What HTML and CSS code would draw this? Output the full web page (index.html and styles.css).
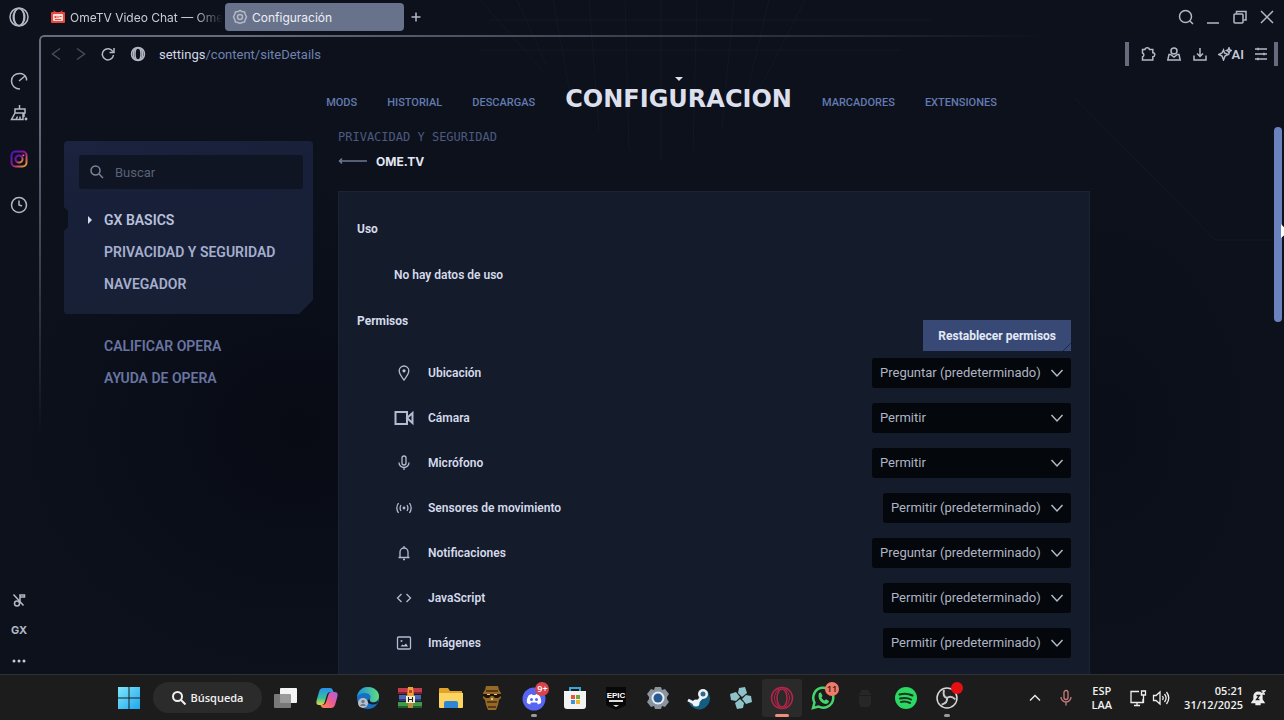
FILE: index.html
```
<!DOCTYPE html>
<html lang="es">
<head>
    <meta charset="utf-8">
    <title>Configuración</title>
    <link rel="stylesheet" href="styles.css">
</head>
<body>
    <div class="browser">
        <svg class="grid-lines" viewBox="0 0 1284 674" preserveAspectRatio="none" aria-hidden="true">
            <path d="M480 0l62 70M517 0l30 66M553 0l20 110M589 0l10 130M625 0l4 150M661 0v160M697 0l-4 150M734 0l-12 130M769 0l-26 110M805 0l-46 90M480 50h420M490 20h440"/>
            <path d="M1075 98l140 142h60"/>
        </svg>

        <header class="tabs">
            <button class="icon-btn opera-menu" aria-label="Menú">
                <svg width="22" height="22" viewBox="0 0 22 22"><circle cx="11" cy="11" r="9"/><ellipse cx="11" cy="11" rx="5" ry="8.5"/><path d="M9 3c-5 4-5 12 0 16M13 3c5 4 5 12 0 16"/></svg>
            </button>
            <button class="tab">
                <svg class="ometv" width="16" height="16" viewBox="0 0 16 16"><path fill="#e9483f" d="M3 1l3 2h4l3-2-1 2h2a1 1 0 0 1 1 1v9a1 1 0 0 1-1 1H2a1 1 0 0 1-1-1V4a1 1 0 0 1 1-1h2z"/><rect x="3" y="5" width="10" height="7" rx="1" fill="#f5dedb"/><path d="M4.500 7h2v2h-2zM7.500 7h1v2h-1zM9.500 7h2v1h-2zM5 10h6v1H5z" fill="#e9483f"/></svg>
                <span class="tab-title">OmeTV Video Chat — Ome</span>
            </button>
            <button class="tab active">
                <svg width="16" height="16" viewBox="0 0 16 16"><path d="M8 1.500l2 1 2.500.5.800 2.500L14.500 8l-1.200 2.500-.8 2.500-2.500.5-2 1-2-1-2.500-.5-.8-2.500L1.500 8l1.200-2.500.8-2.500L6 2.500z"/><circle cx="8" cy="8" r="2.500"/></svg>
                <span class="tab-title">Configuración</span>
            </button>
            <button class="icon-btn new-tab" aria-label="Nueva pestaña">
                <svg width="12" height="12" viewBox="0 0 12 12"><path d="M6 1.500v9M1.500 6h9"/></svg>
            </button>
            <div class="window-buttons">
                <button class="icon-btn" aria-label="Buscar pestañas"><svg width="16" height="16" viewBox="0 0 16 16"><circle cx="7.500" cy="7.500" r="6"/><path d="M12 12l3 3"/></svg></button>
                <button class="icon-btn" aria-label="Minimizar"><svg width="14" height="16" viewBox="0 0 14 16"><path d="M1 14h12"/></svg></button>
                <button class="icon-btn" aria-label="Restaurar"><svg width="16" height="16" viewBox="0 0 16 16"><rect x="2" y="5" width="9" height="9" rx="1"/><path d="M4.500 4.500v-2H14V11h-2.500"/></svg></button>
                <button class="icon-btn" aria-label="Cerrar"><svg width="14" height="14" viewBox="0 0 14 14"><path d="M1 1l12 12M13 1L1 13"/></svg></button>
            </div>
        </header>

        <div class="body">
            <aside class="sidebar">
                <button class="icon-btn" aria-label="GX Control"><svg width="18" height="18" viewBox="0 0 18 18"><path d="M10 17C5 17 1.500 13.500 1.500 9S5 1.500 9.500 1.500c3.500 0 6 2 7 5v2M9 9l6-5"/></svg></button>
                <button class="icon-btn" aria-label="GX Cleaner"><svg width="18" height="18" viewBox="0 0 18 18"><path d="M9.500 1v4M5 5h10v4H5zM5 9l-3.500 6.500H13V9M6 15.500l1.500-3M10 15.500v-3M14 9v4"/><circle cx="16" cy="15" r=".7"/></svg></button>
                <button class="icon-btn instagram" aria-label="Instagram">
                    <svg width="18" height="18" viewBox="0 0 18 18">
                        <defs><linearGradient id="insta" x1="0" y1="0" x2="1" y2="1"><stop offset="0" stop-color="#4316c0"/><stop offset=".5" stop-color="#9b168e"/><stop offset="1" stop-color="#f5a623"/></linearGradient></defs>
                        <rect x="1.500" y="1.500" width="15" height="15" rx="4" stroke-width="2"/><circle cx="9" cy="9" r="3.500" stroke-width="2"/><circle cx="13" cy="5" r=".6"/>
                    </svg>
                </button>
                <button class="icon-btn history" aria-label="Historial"><svg width="18" height="18" viewBox="0 0 18 18"><circle cx="9" cy="9" r="7.500"/><path d="M9 4.500V9l3 1"/></svg></button>
                <button class="icon-btn push" aria-label="Música"><svg width="14" height="14" viewBox="0 0 14 14"><path d="M8 10.500V2h4.500v2H8M1.500 1.500l10 11"/><circle cx="5" cy="10.500" r="2.500"/></svg></button>
                <button class="icon-btn gx">GX</button>
                <button class="icon-btn" aria-label="Más"><svg width="14" height="6" viewBox="0 0 14 6"><circle class="dot-fill" cx="2" cy="3" r="1.500"/><circle class="dot-fill" cx="7" cy="3" r="1.500"/><circle class="dot-fill" cx="12" cy="3" r="1.500"/></svg></button>
            </aside>

            <div class="page">
                <div class="address-bar">
                    <button class="icon-btn dim" aria-label="Atrás"><svg width="10" height="14" viewBox="0 0 10 14"><path d="M9 1.500L1.500 7 9 12.500"/></svg></button>
                    <button class="icon-btn dim" aria-label="Adelante"><svg width="10" height="14" viewBox="0 0 10 14"><path d="M1 1.500L8.500 7 1 12.500"/></svg></button>
                    <button class="icon-btn" aria-label="Recargar"><svg width="14" height="14" viewBox="0 0 14 14"><path d="M11.800 4.500A5.600 5.600 0 1 0 12.500 8M13 1v4.500H8.500"/></svg></button>
                    <svg class="site-icon" width="16" height="16" viewBox="0 0 16 16"><circle cx="8" cy="8" r="6.500"/><ellipse cx="8" cy="8" rx="3" ry="6"/><path d="M5.500 2.500c-3 3-3 8 0 11M10.500 2.500c3 3 3 8 0 11"/></svg>
                    <span class="url"><b>settings</b>/content/siteDetails</span>
                    <div class="toolbar">
                        <button class="icon-btn" aria-label="Extensiones"><svg width="16" height="16" viewBox="0 0 16 16"><path d="M2.500 3.500H5C5.200 1 9.300 1 9.500 3.500h3.300v3.300c2.600.2 2.600 3.700 0 4V14H2.500v-3c1.800-.8 1.800-3.200 0-4z"/></svg></button>
                        <button class="icon-btn" aria-label="Perfil"><svg width="16" height="16" viewBox="0 0 16 16"><circle cx="8" cy="5" r="3"/><path d="M4.500 8.500H3L1.800 14h12.400L13 8.500h-1.500L8 11z"/></svg></button>
                        <button class="icon-btn" aria-label="Descargas"><svg width="16" height="16" viewBox="0 0 16 16"><path d="M8 2v8M5 7.500l3 3 3-3M2 9.500V14h12V9.500"/></svg></button>
                        <button class="icon-btn ai"><svg width="14" height="14" viewBox="0 0 14 14"><path d="M5.500 3l1 3 3.500 1.500L7 9l-1.500 4L4 9 .8 7.500 4 6zM11 .8l.7 2 1.600.7-1.600.7-.7 2-.7-2-1.600-.7 1.600-.7z"/></svg>AI</button>
                        <button class="icon-btn" aria-label="Configuración rápida"><svg width="14" height="14" viewBox="0 0 14 14"><path d="M1 2h12M1 7h12M1 12h12M4 .8v2.400M10 5.800v2.400M4 10.800v2.400"/></svg></button>
                    </div>
                </div>

                <nav class="sections">
                    <a href="#">MODS</a>
                    <a href="#">HISTORIAL</a>
                    <a href="#">DESCARGAS</a>
                    <h1>CONFIGURACION</h1>
                    <a href="#">MARCADORES</a>
                    <a href="#">EXTENSIONES</a>
                </nav>

                <div class="settings">
                    <div class="menu-column">
                        <div class="menu">
                            <label class="search">
                                <svg width="14" height="14" viewBox="0 0 14 14"><circle cx="5.500" cy="5.500" r="4.500"/><path d="M9 9l4 4"/></svg>
                                <input type="text" placeholder="Buscar" aria-label="Buscar">
                            </label>
                            <a class="current" href="#">GX BASICS</a>
                            <a href="#">PRIVACIDAD Y SEGURIDAD</a>
                            <a href="#">NAVEGADOR</a>
                        </div>
                        <div class="menu-extra">
                            <a href="#">CALIFICAR OPERA</a>
                            <a href="#">AYUDA DE OPERA</a>
                        </div>
                    </div>

                    <main class="content">
                        <div class="crumb">PRIVACIDAD Y SEGURIDAD</div>
                        <div class="site">
                            <a href="#" aria-label="Volver"><svg width="30" height="8" viewBox="0 0 30 8"><path d="M29 4H1.500M4 1.500L1.500 4 4 6.500"/></svg></a>
                            <h2>OME.TV</h2>
                        </div>
                        <div class="card">
                            <h3>Uso</h3>
                            <p>No hay datos de uso</p>
                            <div class="permissions-head">
                                <h3>Permisos</h3>
                                <button class="reset">Restablecer permisos</button>
                            </div>
                            <div class="row">
                                <svg width="20" height="20" viewBox="0 0 20 20"><path d="M10 17C7 13 5.200 11 5.200 7.800a4.800 4.800 0 0 1 9.600 0C14.800 11 13 13 10 17z"/><circle class="dot-fill" cx="10" cy="7.800" r="1.600"/></svg>
                                <label for="ubicacion">Ubicación</label>
                                <div class="select">
                                    <select id="ubicacion"><option>Preguntar (predeterminado)</option><option>Permitir</option><option>Bloquear</option></select>
                                    <svg width="14" height="10" viewBox="0 0 14 10"><path d="M1.500 2L7 8l5.500-6"/></svg>
                                </div>
                            </div>
                            <div class="row">
                                <svg width="20" height="20" viewBox="0 0 20 20"><path stroke-width="2" d="M1.500 4H13v12H1.500zM13 10l5.500-5v10z"/></svg>
                                <label for="camara">Cámara</label>
                                <div class="select">
                                    <select id="camara"><option>Preguntar (predeterminado)</option><option selected>Permitir</option><option>Bloquear</option></select>
                                    <svg width="14" height="10" viewBox="0 0 14 10"><path d="M1.500 2L7 8l5.500-6"/></svg>
                                </div>
                            </div>
                            <div class="row">
                                <svg width="20" height="20" viewBox="0 0 20 20"><rect x="8" y="3" width="4" height="9" rx="2"/><path d="M5 9.500a5 5 0 0 0 10 0M10 14.500V17"/></svg>
                                <label for="microfono">Micrófono</label>
                                <div class="select">
                                    <select id="microfono"><option>Preguntar (predeterminado)</option><option selected>Permitir</option><option>Bloquear</option></select>
                                    <svg width="14" height="10" viewBox="0 0 14 10"><path d="M1.500 2L7 8l5.500-6"/></svg>
                                </div>
                            </div>
                            <div class="row">
                                <svg width="20" height="20" viewBox="0 0 20 20"><path d="M4.500 5c-2 3-2 7 0 10M7 7c-1.200 2-1.200 4 0 6M15.500 5c2 3 2 7 0 10M13 7c1.200 2 1.200 4 0 6"/><circle cx="10" cy="10" r=".8"/></svg>
                                <label for="sensores">Sensores de movimiento</label>
                                <div class="select">
                                    <select id="sensores"><option>Permitir (predeterminado)</option><option>Permitir</option><option>Bloquear</option></select>
                                    <svg width="14" height="10" viewBox="0 0 14 10"><path d="M1.500 2L7 8l5.500-6"/></svg>
                                </div>
                            </div>
                            <div class="row">
                                <svg width="20" height="20" viewBox="0 0 20 20"><path d="M4.500 14.500h11M6 14.500V9a4 4 0 0 1 8 0v5.500M10 3v2M9 16.500h2"/></svg>
                                <label for="notificaciones">Notificaciones</label>
                                <div class="select">
                                    <select id="notificaciones"><option>Preguntar (predeterminado)</option><option>Permitir</option><option>Bloquear</option></select>
                                    <svg width="14" height="10" viewBox="0 0 14 10"><path d="M1.500 2L7 8l5.500-6"/></svg>
                                </div>
                            </div>
                            <div class="row">
                                <svg width="20" height="20" viewBox="0 0 20 20"><path d="M7.500 6l-4 4 4 4M12.500 6l4 4-4 4"/></svg>
                                <label for="javascript">JavaScript</label>
                                <div class="select">
                                    <select id="javascript"><option>Permitir (predeterminado)</option><option>Permitir</option><option>Bloquear</option></select>
                                    <svg width="14" height="10" viewBox="0 0 14 10"><path d="M1.500 2L7 8l5.500-6"/></svg>
                                </div>
                            </div>
                            <div class="row">
                                <svg width="20" height="20" viewBox="0 0 20 20"><rect x="3.500" y="4" width="13" height="12" rx="1"/><path class="dot-fill" d="M6.500 13.500l2-2 1.500 1 2-2 2 3z"/><circle cx="7.500" cy="8" r=".4"/></svg>
                                <label for="imagenes">Imágenes</label>
                                <div class="select">
                                    <select id="imagenes"><option>Permitir (predeterminado)</option><option>Permitir</option><option>Bloquear</option></select>
                                    <svg width="14" height="10" viewBox="0 0 14 10"><path d="M1.500 2L7 8l5.500-6"/></svg>
                                </div>
                            </div>
                        </div>
                    </main>
                </div>
                <div class="scrollbar"></div>
                <svg class="cursor" width="12" height="18" viewBox="0 0 12 18"><path d="M1 1v14l3.500-3 2 5 2-1-2-4.500H11z"/></svg>
            </div>
        </div>
    </div>

    <footer class="taskbar">
        <button class="start" aria-label="Inicio">
            <svg width="22" height="22" viewBox="0 0 22 22">
                <defs><linearGradient id="win" x1="0" y1="0" x2="1" y2="1"><stop offset="0" stop-color="#7fe6fb"/><stop offset="1" stop-color="#1ea7ee"/></linearGradient></defs>
                <path fill="url(#win)" d="M0 0h10.500v10.500H0zM11.500 0H22v10.500H11.500zM0 11.500h10.500V22H0zM11.500 11.500H22V22H11.500z"/>
            </svg>
        </button>
        <button class="task-search"><svg width="14" height="14" viewBox="0 0 14 14"><circle cx="5.500" cy="5.500" r="4.500"/><path d="M9 9l4.500 4.500"/></svg>Búsqueda</button>

        <div class="apps">
            <button aria-label="Vista de tareas"><svg width="26" height="26" viewBox="0 0 26 26"><rect x="7" y="3" width="17" height="15" rx="1" fill="#f4f4f4"/><rect x="1" y="9" width="17" height="14" rx="1" fill="#8a8a8a" opacity=".85"/></svg></button>
            <button aria-label="Copilot">
                <svg width="26" height="26" viewBox="0 0 26 26">
                    <defs><linearGradient id="cp1" x1="0" y1="0" x2="0" y2="1"><stop offset="0" stop-color="#2a8ff2"/><stop offset=".6" stop-color="#35c19a"/><stop offset="1" stop-color="#f2d43b"/></linearGradient>
                    <linearGradient id="cp2" x1="1" y1="0" x2="0" y2="1"><stop offset="0" stop-color="#a661e8"/><stop offset=".5" stop-color="#ef5b8d"/><stop offset="1" stop-color="#fb8a4a"/></linearGradient></defs>
                    <path fill="url(#cp1)" d="M9 3h7c2 0 3 2 3.500 4h-3c-2 0-3 1-3.600 3l-2.200 7c-.5 2-1.500 3-3.500 3H5c-3 0-3-3-2-6l2-7c.8-3 2-4 4-4z"/>
                    <path fill="url(#cp2)" d="M17 23h-7c-2 0-3-1-3.500-3h2c2 0 3-1 3.600-3l2.200-7c.5-2 1.500-3 3.500-3H21c3 0 3 3 2 6l-2 7c-.8 2-2 3-4 3z"/>
                </svg>
            </button>
            <button aria-label="Edge">
                <svg width="26" height="26" viewBox="0 0 26 26">
                    <defs><linearGradient id="edge" x1="0" y1="0" x2="1" y2="0"><stop offset="0" stop-color="#1d8fe0"/><stop offset="1" stop-color="#5fdc7c"/></linearGradient></defs>
                    <circle cx="13" cy="13" r="11" fill="#1670c0"/>
                    <path fill="url(#edge)" d="M2 12C3 5 8 2 13 2c6 0 11 4 11 9 0 4-3 6-6 6-2 0-4-1-3-3 2-3-1-6-5-6-4 0-7 2-8 4z"/>
                    <path fill="#1b1b1c" d="M15 14c-1 2 1 4 4 3.500 2 0 3-1 4-2 0 1 0 2-1 3-4 2-9 1-10-3z"/>
                    <circle cx="8" cy="18" r="5" fill="#b9c2cc"/><circle cx="8" cy="16.500" r="1.800" fill="#717b86"/><path d="M5 21c1-3 5-3 6 0z" fill="#717b86"/>
                </svg>
            </button>
            <button aria-label="WinRAR"><svg width="26" height="26" viewBox="0 0 26 26"><path fill="#c23b4b" d="M1 3h24v6H1z"/><path fill="#4d68b8" d="M2 10h22v6H2z"/><path fill="#3f9a4c" d="M1 17h24v6H1z"/><path fill="#7c2430" d="M1 7h24v2H1z"/><path fill="#2c3f7c" d="M2 14h22v2H2z"/><path fill="#215c2b" d="M1 21h24v2H1z"/><path fill="#e8a531" d="M11 2h5l1 9h-7z"/><path fill="#d33a2e" d="M12 5h3v3h-3z"/><path fill="#f3ead2" d="M9 11h9v7H9z"/><path fill="#222" d="M11 12h1v5h-1zM15 12h1v5h-1zM12 14h3v1h-3z"/><path fill="#b98a3a" d="M11 18h5v5h-5z"/></svg></button>
            <button aria-label="Explorador"><svg width="26" height="26" viewBox="0 0 26 26"><path fill="#e0a32c" d="M1 4a1 1 0 0 1 1-1h8l2 3h12v6H1z"/><path fill="#fbd462" d="M1 8h24v14a1 1 0 0 1-1 1H2a1 1 0 0 1-1-1z"/><path fill="#2f86d6" d="M6 23v-5a2 2 0 0 1 2-2h10a2 2 0 0 1 2 2v5z"/></svg></button>
            <button aria-label="Juego"><svg width="26" height="26" viewBox="0 0 26 26"><path fill="#94692a" d="M7 1h12l1 4 2 3v5l-2 2-1 5-2 5H9l-2-5-1-5-2-2V8l2-3z"/><path fill="#5b3a12" d="M7 5h12v2H7zM8 16h10v2H8zM9 21h8v2H9z"/><path fill="#1c1408" d="M4 9h18v2l-3 2h-3l-2-2h-2l-2 2H7l-3-2z"/><path fill="#e5c878" d="M8 9h3v1H8zM15 9h3v1h-3zM12 13h2v2h-2z"/></svg></button>
            <button aria-label="Discord"><svg width="26" height="26" viewBox="0 0 26 26"><circle cx="13" cy="14" r="11.500" fill="#5865f2"/><path fill="#fff" d="M8 10l3-1 .5 1h3l.5-1 3 1c2 3 2.500 5 2 8l-3 1.500-1-2h-6l-1 2L6 18c-.5-3 0-5 2-8z"/><circle cx="10.500" cy="14.500" r="1.500" fill="#5865f2"/><circle cx="15.500" cy="14.500" r="1.500" fill="#5865f2"/></svg><span class="badge">9+</span><i class="running"></i></button>
            <button aria-label="Microsoft Store"><svg width="26" height="26" viewBox="0 0 26 26"><path d="M8 7V3h10v4" fill="none" stroke="#36a6d8" stroke-width="2"/><path fill="#f3f3f3" d="M2 6h22v15a3 3 0 0 1-3 3H5a3 3 0 0 1-3-3z"/><path fill="#e8563a" d="M9 10h4v4H9z"/><path fill="#71a83a" d="M14 10h4v4h-4z"/><path fill="#3c93d6" d="M9 15h4v4H9z"/><path fill="#efb42f" d="M14 15h4v4h-4z"/></svg></button>
            <button aria-label="Epic Games"><svg width="26" height="26" viewBox="0 0 26 26"><path fill="#080808" d="M3 2h20v18l-10 5-10-5z"/><text x="13" y="13" class="epic">EPIC</text><path fill="#ddd" d="M6 15h14v2H6zM10 20h6l-3 2z"/></svg></button>
            <button aria-label="Configuración"><svg width="26" height="26" viewBox="0 0 26 26"><path fill="#8a939e" d="M10 2h6l1 3 3-1 4 5-2 3v2l2 3-4 5-3-1-1 3h-6l-1-3-3 1-4-5 2-3v-2L2 9l4-5 3 1z"/><circle cx="13" cy="13" r="6.500" fill="#e8eef5"/><circle cx="13" cy="13" r="4.500" fill="#28598f"/></svg></button>
            <button aria-label="Steam"><svg width="26" height="26" viewBox="0 0 26 26"><path fill="#155d80" d="M24 13a11 11 0 0 1-21 5l8-3 6-10 5 1z"/><circle cx="17" cy="9" r="5" fill="#eef3f7"/><circle cx="17" cy="9" r="2.500" fill="#3a6686"/><path d="M2 15l8 4 6-7" fill="none" stroke="#eef3f7" stroke-width="3"/><circle cx="10" cy="18" r="3.500" fill="#eef3f7"/></svg></button>
            <button aria-label="Emulador"><svg width="26" height="26" viewBox="0 0 26 26"><g fill="#8fc3c9"><path d="M11 3l6-1 2 6-5 4-4-4z"/><path d="M11 3l6-1 2 6-5 4-4-4z" transform="rotate(90 13 13)"/><path d="M11 3l6-1 2 6-5 4-4-4z" transform="rotate(180 13 13)"/><path d="M11 3l6-1 2 6-5 4-4-4z" transform="rotate(270 13 13)"/></g></svg></button>
            <button class="open" aria-label="Opera GX"><svg width="26" height="26" viewBox="0 0 26 26"><g fill="none" stroke="#b8234c" stroke-width="1.500"><circle cx="13" cy="13" r="10.500"/><ellipse cx="13" cy="13" rx="5" ry="9"/><path d="M10 4c-6 5-6 13 0 18M16 4c6 5 6 13 0 18" stroke-width="1"/></g></svg><i class="running"></i></button>
            <button aria-label="WhatsApp"><svg width="26" height="26" viewBox="0 0 26 26"><path d="M3 23l1.500-5.500A10 10 0 1 1 8.500 21.500z" fill="none" stroke="#45d36c" stroke-width="2.500"/><path fill="#45d36c" d="M9 8l2-.5 1.500 3.500-1 1.500c.7 1.500 1.500 2.300 3 3l1.500-1.200 3 1.700c0 2-2 3-3.500 3C11 18.500 7 13 9 8z"/></svg><span class="badge orange">11</span></button>
            <button aria-label="Aplicación"><svg width="26" height="26" viewBox="0 0 26 26"><path fill="#272727" d="M9 5h8v3h2v2H7V8h2zM7 11h12v8l-2 3H9l-2-3z"/></svg></button>
            <button aria-label="Spotify"><svg width="26" height="26" viewBox="0 0 26 26"><circle cx="13" cy="13" r="11" fill="#2bd863"/><path d="M6.500 9.500c5-1.500 9-1 13 1M7 13.500c4-1 8-.7 11 1M8 17c3-.8 6-.5 9 1" fill="none" stroke="#17341f" stroke-width="2" stroke-linecap="round"/></svg></button>
            <button aria-label="OBS"><svg width="26" height="26" viewBox="0 0 26 26"><circle cx="13" cy="13" r="10" fill="#202020" stroke="#d8d8d8" stroke-width="1.500"/><g fill="none" stroke="#c8c8c8" stroke-width="2"><path d="M10 5c-1 4 0 7 3 8"/><path d="M10 5c-1 4 0 7 3 8" transform="rotate(120 13 13)"/><path d="M10 5c-1 4 0 7 3 8" transform="rotate(240 13 13)"/></g></svg><span class="badge dot"></span><i class="running"></i></button>
        </div>

        <div class="tray">
            <button aria-label="Iconos ocultos"><svg width="12" height="8" viewBox="0 0 12 8"><path d="M1 6.500l5-5 5 5"/></svg></button>
            <svg class="mic" width="12" height="18" viewBox="0 0 12 18"><rect x="4" y="1.500" width="4" height="9" rx="2"/><path d="M1 8a5 5 0 0 0 10 0M6 13v3.500"/></svg>
            <span class="lang">ESP<br>LAA</span>
            <svg class="net" width="18" height="18" viewBox="0 0 18 18"><path d="M10 2.500H2v11h12V10M5 16.500h6M8 13.500v3"/><path d="M12.500 2h4v4h-4zM14.500 6v8"/></svg>
            <svg width="18" height="18" viewBox="0 0 18 18"><path d="M1.500 6.500H4L8 3v12l-4-3.500H1.500zM10.500 7c1 1.500 1 2.500 0 4M12.500 5c2 2.500 2 5.500 0 8M14.500 3c3 4 3 8 0 12"/></svg>
            <span class="clock">05:21<br>31/12/2025</span>
            <svg width="15" height="18" viewBox="0 0 15 18"><path fill="#eee" d="M1 13.500h12l-2-3V7c0-5-8-5-8 0v3.500zM5 14.500h4v1H5z"/><path stroke="#1c1c1c" d="M5.500 6.500h3l-3 4h3"/><path d="M10.500 2H14l-3.500 3H14"/></svg>
        </div>
    </footer>
</body>
</html>
```
FILE: styles.css
```
*{
    box-sizing: border-box;
}
body{
    margin: 0;
    height: 100vh;
    display: flex;
    flex-direction: column;
    overflow: hidden;
    background: #0c111c;
    color: #d5daea;
    font-family: Roboto, "Liberation Sans", sans-serif;
    font-size: 13px;
}
a{
    color: inherit;
    text-decoration: none;
}
button{
    border: 0;
    padding: 0;
    background: none;
    color: inherit;
    font: inherit;
}
svg{
    display: block;
    flex: none;
}
h1, h2, h3, p{
    margin: 0;
}

/* browser window */
.browser{
    position: relative;
    flex: 1;
    min-height: 0;
    display: flex;
    flex-direction: column;
    background:
        radial-gradient(ellipse 300px 260px at 300px 430px, #080b14, transparent),
        radial-gradient(ellipse 160px 240px at 1110px 430px, #090e18, transparent),
        #0c111c;
}
.browser svg{
    fill: none;
    stroke: #b4b8c6;
    stroke-width: 1.5;
}
.browser .grid-lines{
    position: absolute;
    inset: 0;
    width: 100%;
    height: 100%;
    stroke: #121826;
    stroke-width: 1;
}
.browser .ometv{
    stroke: none;
}
.browser .dot-fill{
    fill: #c3c9db;
    stroke: none;
}
.icon-btn{
    display: flex;
    align-items: center;
    justify-content: center;
}

/* tabs */
.tabs{
    position: relative;
    display: flex;
    align-items: center;
    height: 35px;
    padding: 0 10px 1px 0;
}
.opera-menu{
    width: 38px;
}
.tab{
    display: flex;
    align-items: center;
    gap: 4px;
    width: 179px;
    height: 28px;
    padding: 0 8px 0 7px;
    border-radius: 4px;
    text-align: left;
    font: 500 12px Roboto, sans-serif;
    color: #c9cdd9;
}
.tab:not(.active){
    margin: 0 3px 0 5px;
    font: 12px Inter, sans-serif;
}
.tab.active{
    background: #68728a;
    color: #eceff6;
    font: 12px Inter, sans-serif;
}
.tab-title{
    white-space: nowrap;
}
.tab:not(.active) .tab-title{
    mask-image: linear-gradient(to right, #000 82%, transparent);
}
.new-tab{
    width: 24px;
}
.window-buttons{
    display: flex;
    align-items: center;
    gap: 12px;
    margin-left: auto;
}

.body{
    flex: 1;
    min-height: 0;
    display: flex;
}
.sidebar{
    position: relative;
    display: flex;
    flex-direction: column;
    align-items: center;
    gap: 14px;
    width: 39px;
    padding: 37px 1px 10px 0;
}
.instagram, .history{
    margin-top: 14px;
}
.sidebar .instagram svg{
    stroke: url(#insta);
}
.sidebar .push{
    margin-top: auto;
}
.gx{
    height: 18px;
    margin-bottom: 5px;
    color: #b4b8c6;
    font: bold 11px Inter, sans-serif;
}

.page{
    position: relative;
    flex: 1;
    min-width: 0;
    overflow: hidden;
}
/* frame that fades out away from the corner */
.page::before{
    content: "";
    position: absolute;
    inset: 0;
    border: solid #666c7d;
    border-width: 2px 0 0 2px;
    border-top-left-radius: 5px;
    mask-image: radial-gradient(ellipse 1010px 400px at 0 0, #000 20%, transparent);
    pointer-events: none;
}
.address-bar{
    display: flex;
    align-items: center;
    height: 38px;
    padding: 0 6px 0 12px;
}
.address-bar > .icon-btn{
    margin-right: 15px;
}
.dim{
    opacity: .35;
}
.address-bar > .site-icon{
    margin-right: 13px;
}
.url{
    color: #7082b0;
    font-size: 13px;
}
.url b{
    color: #d3d8e6;
    font-weight: 400;
}
.toolbar{
    display: flex;
    align-items: center;
    gap: 10px;
    height: 24px;
    margin-left: auto;
    padding: 0 6px 0 11px;
    border: solid #666c7d;
    border-width: 0 4px;
}
.ai{
    color: #c3c7d3;
    font-weight: 600;
}

.sections{
    display: flex;
    align-items: center;
    justify-content: center;
    gap: 30px;
    height: 52px;
    color: #647ab0;
    font-size: 11px;
    font-weight: 500;
}
.sections a{
    padding-top: 6px;
}
.sections h1{
    position: relative;
    color: #dcdfec;
    font: bold 24px/40px "DejaVu Sans", sans-serif;
}
.sections h1::before{
    content: "";
    position: absolute;
    top: -2px;
    left: 50%;
    margin-left: -4px;
    border: 4px solid transparent;
    border-top-color: #dcdfec;
    border-bottom: 0;
}

/* settings */
.settings{
    display: grid;
    grid-template-columns: 249px minmax(0, 752px);
    gap: 25px;
    padding: 0 25px;
}
.menu-column{
    padding-top: 16px;
    color: #a5afcd;
    font-size: 14px;
    font-weight: 600;
    line-height: 32px;
}
.menu-column a{
    display: block;
    padding-left: 25px;
}
.menu{
    height: 173px;
    padding: 14px 10px 0 15px;
    border-radius: 4px;
    background: linear-gradient(170deg, #1b2340, #18203a 20%, #182035);
    clip-path: polygon(0 0, 100% 0, 100% 159px, 235px 100%, 0 100%, 0 90px, 4px 86px, 4px 70px, 0 66px);
}
.search{
    display: flex;
    align-items: center;
    gap: 11px;
    height: 34px;
    margin-bottom: 15px;
    padding: 0 11px;
    border-radius: 3px;
    background: #0f1522;
}
.search svg{
    stroke: #7d8498;
}
.search input{
    flex: 1;
    min-width: 0;
    border: 0;
    padding: 0;
    outline: 0;
    background: none;
    color: #d5daea;
    font: 13px Roboto, sans-serif;
}
.search input::placeholder{
    color: #5b6275;
}
.menu .current{
    position: relative;
    color: #b9c2dc;
}
.menu .current::before{
    content: "";
    position: absolute;
    left: 9px;
    top: 12px;
    border: 4px solid transparent;
    border-left-color: #d5daea;
    border-right: 0;
}
.menu-extra{
    padding: 16px 0 0 15px;
    color: #6975a2;
}

.crumb{
    height: 22px;
    color: #4d5a80;
    font: 12px/24px "DejaVu Sans Mono", monospace;
}
.site{
    display: flex;
    align-items: center;
    gap: 8px;
    height: 28px;
    color: #e4e7f3;
}
.site h2{
    font: bold 12px Inter, sans-serif;
}
.site svg{
    stroke: #6f7890;
}
.card{
    margin-top: 16px;
    padding: 27px 18px 30px;
    border: 1px solid #1b2436;
    background: #141b2a;
    font-size: 12px;
    font-weight: 600;
}
.card h3{
    font-size: 12px;
    font-weight: 700;
    line-height: 20px;
}
.card p{
    padding: 26px 0 26px 37px;
    line-height: 20px;
}
.permissions-head{
    display: flex;
    justify-content: space-between;
    height: 39px;
}
.reset{
    height: 31px;
    margin-top: 9px;
    padding: 0 15px;
    background: linear-gradient(135deg, transparent 95%, #1c2a52 95%, #1c2a52 96%, transparent 96%), #384976;
    color: #e4e9f8;
    font-weight: 700;
}
.row{
    display: flex;
    align-items: center;
    height: 45px;
    padding-left: 37px;
}
.row > svg{
    stroke: #b4bcd3;
    stroke-width: 1.3;
}
.row label{
    flex: 1;
    padding-left: 14px;
}
.select{
    position: relative;
}
.select select{
    display: block;
    height: 30px;
    padding: 0 30px 0 8px;
    appearance: none;
    border: 0;
    border-radius: 3px;
    background: #04070b;
    color: #b0b4c3;
    font: 13px Roboto, sans-serif;
}
.select svg{
    position: absolute;
    top: 10px;
    right: 7px;
    pointer-events: none;
}
.scrollbar{
    position: absolute;
    top: 92px;
    right: 2px;
    width: 8px;
    height: 195px;
    border-radius: 4px;
    background: #6a82bd;
}
.browser .cursor{
    position: absolute;
    top: 188px;
    right: -8px;
    fill: #fff;
    stroke: none;
}

/* taskbar */
.taskbar{
    display: flex;
    align-items: center;
    height: 46px;
    padding: 0 18px 0 118px;
    border-top: 1px solid #303236;
    background: #1c1c1c;
    color: #f0f0f0;
    font-family: "Open Sans", "Noto Sans", sans-serif;
    font-size: 11px;
    font-weight: 600;
}
.task-search{
    display: flex;
    align-items: center;
    justify-content: center;
    gap: 5px;
    width: 109px;
    height: 31px;
    margin: 0 3px 0 13px;
    border-radius: 16px;
    background: #2b2b2b;
}
.task-search svg{
    fill: none;
    stroke: #f0f0f0;
    stroke-width: 2;
}
.apps{
    display: grid;
    grid-template-columns: repeat(17, 1fr);
    flex: 0 1 703px;
}
.apps button{
    position: relative;
    display: flex;
    align-items: center;
    justify-content: center;
    height: 38px;
    margin: 0 1px;
    border-radius: 3px;
}
.apps .open{
    background: #2a2a2a;
}
.epic{
    fill: #fff;
    font: bold 8px "Liberation Sans", sans-serif;
    text-anchor: middle;
}
.badge{
    position: absolute;
    top: 3px;
    right: 4px;
    min-width: 14px;
    height: 14px;
    border-radius: 7px;
    background: #d8434e;
    color: #fff;
    font-size: 9px;
    line-height: 14px;
    text-align: center;
}
.badge.orange{
    background: #f0796a;
    color: #3a1512;
}
.badge.dot{
    min-width: 12px;
    height: 12px;
    background: #e60f14;
}
.running{
    position: absolute;
    bottom: 0;
    left: 50%;
    width: 6px;
    height: 3px;
    margin-left: -3px;
    border-radius: 2px;
    background: #9a9a9a;
}
.open .running{
    width: 14px;
    margin-left: -7px;
    background: #ef8d80;
}
.tray{
    display: flex;
    align-items: center;
    margin-left: auto;
}
.tray svg{
    fill: none;
    stroke: #eee;
    stroke-width: 1.3;
}
.tray .mic{
    margin: 0 20px 0 19px;
    stroke: #c77f7f;
}
.lang, .clock{
    font-size: 11px;
    line-height: 14px;
}
.lang{
    text-align: center;
}
.net{
    margin: 0 5px 0 17px;
}
.clock{
    margin: 0 8px 0 14px;
    text-align: right;
}
```
